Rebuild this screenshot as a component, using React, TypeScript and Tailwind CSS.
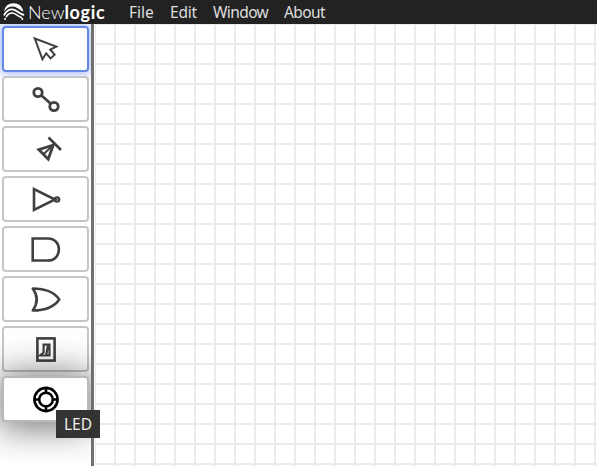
import type { ReactNode } from "react";

type Tool = { name: string; icon: ReactNode };

const tools: Tool[] = [
  {
    name: "Select",
    icon: <path d="M4.8 4.5 L26.3 12.6 L20.2 15.5 L24.6 20.7 L20.6 24.4 L16.2 19.3 L12.4 25.2 Z" strokeWidth="2" />,
  },
  {
    name: "Wire",
    icon: (
      <g strokeWidth="2.8">
        <circle cx="8" cy="8.5" r="4.2" />
        <circle cx="24" cy="22.5" r="4.2" />
        <path d="M11.2 11.3 L20.8 19.7" />
      </g>
    ),
  },
  {
    name: "Buffer",
    icon: (
      <g>
        <path d="M18.5 3.5 L31 16" strokeWidth="2.6" />
        <path d="M23.3 11 L8.8 15.6 L18.2 25.2 Z" strokeWidth="2.8" />
        <path d="M23.3 11 L13.2 20.5" strokeWidth="2" />
      </g>
    ),
  },
  {
    name: "Not",
    icon: (
      <g strokeWidth="2.6">
        <path d="M4 5 V26 L25 15.5 Z" />
        <circle cx="27" cy="15.5" r="2.1" strokeWidth="2.4" />
      </g>
    ),
  },
  {
    name: "And",
    icon: <path d="M2.7 4.5 H18 C32.5 4.5 32.5 26.5 18 26.5 H2.7 Z" strokeWidth="2.6" />,
  },
  {
    name: "Or",
    icon: <path d="M2.8 4.5 C15 4.5 24.5 8.5 29.3 15.5 C24.5 22.5 15 26.5 2.8 26.5 C7.8 19.5 7.8 11.5 2.8 4.5 Z" strokeWidth="2.6" strokeLinejoin="round" />,
  },
  {
    name: "Switch",
    icon: (
      <g>
        <rect x="7.4" y="4.4" width="17.2" height="22.2" strokeWidth="2.6" />
        <path d="M13 10.7 H19.5 V21.3 H16.2 L18 11 M13.6 9.5 V18.5 L10 21.5 H17" strokeWidth="2.2" />
      </g>
    ),
  },
  {
    name: "LED",
    icon: (
      <g strokeWidth="2.6">
        <circle cx="16" cy="15.5" r="11.6" />
        <circle cx="16" cy="15.5" r="6.8" />
        <path d="M16 4 V8.5 M16 22.5 V27 M4.5 15.5 H9 M23 15.5 H27.5" />
      </g>
    ),
  },
];

const frames: Record<string, string> = {
  Select: "border-[#6488e4] text-[#404040] shadow-[0_0_10px_2px_rgba(80,115,245,0.5)]",
  LED: "z-10 border-[#b8b8b8] text-black shadow-[0_2px_36px_4px_rgba(0,0,0,0.55)]",
};

function ToolButton({ name, icon }: Tool) {
  return (
    <button
      aria-label={name}
      className={`relative flex h-[46px] w-[87px] shrink-0 items-center justify-center rounded-[4px] border-2 bg-white ${frames[name] ?? "border-[#c6c6c6] text-[#404040]"}`}
    >
      <svg width="32" height="31" viewBox="0 0 32 31" fill="none" stroke="currentColor">
        {icon}
      </svg>
    </button>
  );
}

export default function App() {
  return (
    <div className="flex h-[466px] w-[597px] flex-col overflow-hidden bg-white">
      <header className="relative z-20 flex h-6 shrink-0 items-center bg-[#222] font-['Noto_Sans',sans-serif] text-[#dedede]">
        <div className="flex w-[129px] items-center pl-[3px] text-white">
          <svg width="22" height="20" viewBox="0 0 22 20" fill="none" stroke="currentColor" strokeLinecap="round">
            <path d="M1 9.5 C2 4 5.5 1.2 10.5 1.2 C15.5 1.2 19.3 4 20.4 9.5 C16.5 8.5 14.5 5 10 4.6 C6 4.5 3.5 6.5 1 9.5 Z" fill="currentColor" stroke="none" />
            <path d="M1.3 12.8 C3.5 9 6 7.2 9.3 7.4 C13.5 7.7 16 11.8 20.4 12.8" strokeWidth="1.9" />
            <path d="M3.2 14.8 C5.2 11.8 7.2 10.9 9.5 11.1 C12.8 11.4 14.8 14.6 18.5 15.5" strokeWidth="1.5" />
            <circle cx="2" cy="17" r="1" fill="currentColor" stroke="none" />
            <circle cx="19.3" cy="17" r="1" fill="currentColor" stroke="none" />
          </svg>
          <span className="ml-[3px] flex font-['Lato',sans-serif] text-[18px] leading-6 font-light">
            New<b className="font-bold tracking-[0.7px]">logic</b>
          </span>
        </div>
        <nav className="flex text-[15.5px] leading-6">
          <span className="w-[41px]">File</span>
          <span className="w-[43px] tracking-[-0.2px]">Edit</span>
          <span className="w-[71px] tracking-[-0.6px]">Window</span>
          <span className="tracking-[-0.6px]">About</span>
        </nav>
      </header>
      <div className="relative flex min-h-0 flex-1">
        <aside className="flex w-[94px] shrink-0 flex-col gap-1 overflow-hidden border-r-[3px] border-[#707070] pt-[2px] pl-[2px]">
          {tools.map((tool) => (
            <ToolButton key={tool.name} {...tool} />
          ))}
        </aside>
        <main className="ml-px flex-1 bg-[linear-gradient(#ebebeb_2px,transparent_2px),linear-gradient(90deg,#ebebeb_2px,transparent_2px)] bg-[length:20px_20px] bg-[position:-1px_19px]" />
        <span role="tooltip" className="absolute left-14 top-[386px] z-20 flex h-7 w-11 items-center justify-center bg-[#333] font-['Noto_Sans',sans-serif] text-[15.5px] leading-7 text-[#eee]">
          LED
        </span>
      </div>
    </div>
  );
}
